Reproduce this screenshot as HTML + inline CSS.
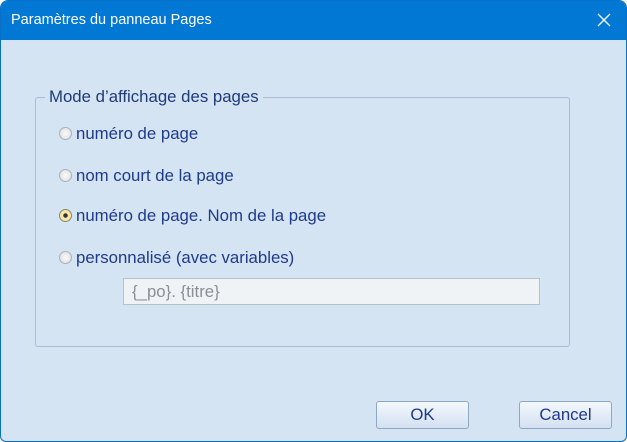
<!DOCTYPE html>
<html><head><meta charset="utf-8"><style>
body{margin:0;width:627px;height:442px;overflow:hidden;font-family:"Liberation Sans",sans-serif;}
.win{position:absolute;left:0;top:0;width:625px;height:440px;background:#d5e4f3;border:1px solid #0a6fc8;border-radius:8px 8px 6px 6px;overflow:hidden}
.title{position:absolute;left:0;top:0;width:625px;height:39px;background:#0078d4;color:#fff;font-size:14.5px;line-height:39px;padding-left:10px;box-sizing:border-box}
.x{position:absolute;right:14px;top:11px;width:16px;height:16px}
.grp{position:absolute;left:34px;top:96px;width:533px;height:248px;border:1px solid #a9bcd4;border-radius:3px}
.leg{position:absolute;left:44px;top:86px;background:#d5e4f3;padding:0 4px;color:#1e3a78;font-size:16.8px;line-height:20px}
.r{position:absolute;left:58px;color:#1e3a8c;font-size:16.8px;line-height:20px}
.r i{display:inline-block;width:13px;height:13px;border:1px solid #a8b0ba;border-radius:50%;background:radial-gradient(circle,#fafafa,#dcdcdc);vertical-align:-1px;margin-right:4px;box-sizing:border-box;position:relative}
.r i.on{border-color:#8a8470;background:radial-gradient(circle,#333 0 2px,#fbe9a8 2.5px,#f3e0a0)}
.tb{position:absolute;left:122px;top:277px;width:417px;height:27px;border:1px solid #b6c1cc;background:#f0f3f6;box-sizing:border-box;color:#8a8f96;font-size:16.8px;line-height:25px;padding-left:8px}
.btn{position:absolute;top:400px;width:93px;height:28px;border:1px solid #8fa6c4;border-radius:3px;box-sizing:border-box;background:linear-gradient(#f4f8fc,#e3ecf7 50%,#d4e1f1);color:#1e3a8c;font-size:16.8px;text-align:center;line-height:26px}
</style></head><body>
<div class="win">
<div class="title">Paramètres du panneau Pages
<svg class="x" viewBox="0 0 16 16"><path d="M2 2L14 14M14 2L2 14" stroke="#fff" stroke-width="1.3"/></svg></div>
<div class="grp"></div>
<div class="leg">Mode d’affichage des pages</div>
<div class="r" style="top:123px"><i></i>numéro de page</div>
<div class="r" style="top:165px"><i></i>nom court de la page</div>
<div class="r" style="top:205px"><i class="on"></i>numéro de page. Nom de la page</div>
<div class="r" style="top:247px"><i></i>personnalisé (avec variables)</div>
<div class="tb">{_po}. {titre}</div>
<div class="btn" style="left:375px">OK</div>
<div class="btn" style="left:518px">Cancel</div>
</div>
</body></html>
